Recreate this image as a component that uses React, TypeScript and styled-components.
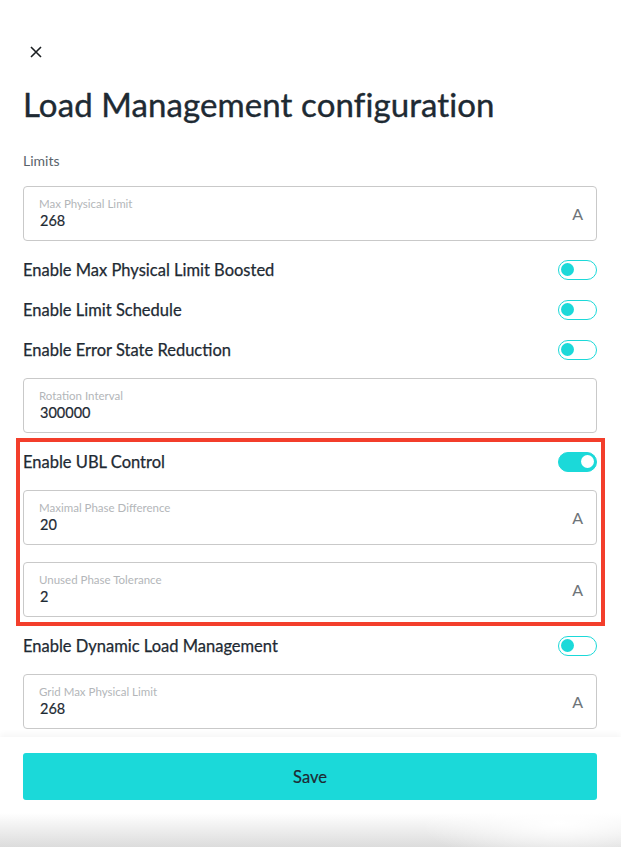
import React from "react";
import styled, { createGlobalStyle, css } from "styled-components";

const Global = createGlobalStyle`
  html, body { margin: 0; padding: 0; background: #ffffff; }
  body { font-family: Lato, "Open Sans", Arial, sans-serif; color: #1e2a33; }
  * { box-sizing: border-box; }
`;

const Page = styled.div`
  width: 621px;
  height: 847px;
  display: flex;
  flex-direction: column;
  overflow: hidden;
  position: relative;
  background: #fff;
  &::after {
    content: "";
    position: absolute;
    left: 0;
    right: 0;
    bottom: 0;
    height: 34px;
    background:
      radial-gradient(ellipse 140px 40px at 560px 10px, rgba(255,255,255,1) 0%, rgba(255,255,255,0) 100%),
      linear-gradient(to bottom, rgba(255,255,255,0) 0%, rgba(218,218,218,0.95) 100%);
    pointer-events: none;
  }
`;

const Scroll = styled.div`
  flex: 1;
  overflow: hidden;
  padding: 0 24px 0 23px;
`;

const CloseButton = styled.button`
  display: block;
  margin: 45px 0 0 6px;
  padding: 0;
  width: 16px;
  height: 16px;
  border: none;
  background: none;
  color: #1b1f22;
  cursor: pointer;
`;

const Title = styled.h1`
  margin: 23px 0 0;
  font-size: 33px;
  font-weight: 400;
  line-height: 40px;
  letter-spacing: 0.1px;
  color: #1e2a33;
  -webkit-text-stroke: 0.4px #1e2a33;
`;

const Section = styled.div`
  margin: 28px 0 16px;
  font-size: 14px;
  line-height: 18px;
  color: #59636b;
`;

const Field = styled.div<{ $mt?: number; $mb?: number }>`
  height: 55px;
  border: 1px solid #c9c9c9;
  border-radius: 4px;
  display: flex;
  align-items: center;
  padding: 0 13px 0 15px;
  margin-top: ${(p) => p.$mt ?? 0}px;
  margin-bottom: ${(p) => p.$mb ?? 0}px;
`;

const FieldBody = styled.div`
  flex: 1;
  display: flex;
  flex-direction: column;
  padding-top: 1px;
`;

const FieldLabel = styled.span`
  font-size: 11.5px;
  line-height: 14px;
  color: #b3b6b9;
`;

const FieldValue = styled.span`
  font-size: 14.5px;
  line-height: 20px;
  margin-left: 1px;
  color: #1e2a33;
  -webkit-text-stroke: 0.2px #1e2a33;
`;

const Unit = styled.span`
  font-size: 16px;
  color: #6e7479;
  margin-bottom: 1px;
`;

const ToggleRow = styled.div`
  height: 40px;
  display: flex;
  align-items: center;
  justify-content: space-between;
`;

const ToggleLabel = styled.span`
  font-size: 16.5px;
  font-weight: 400;
  color: #1e2a33;
  -webkit-text-stroke: 0.25px #1e2a33;
`;

const Switch = styled.span<{ $on?: boolean }>`
  position: relative;
  width: 39px;
  height: 20px;
  border-radius: 10px;
  border: 1.5px solid #1bd9d9;
  background: ${(p) => (p.$on ? "#1bd9d9" : "#fff")};
  &::after {
    content: "";
    position: absolute;
    top: 2px;
    width: 13px;
    height: 13px;
    border-radius: 50%;
    ${(p) =>
      p.$on
        ? css`
            right: 2px;
            background: #fff;
          `
        : css`
            left: 2px;
            background: #1bd9d9;
          `}
  }
`;

const Highlight = styled.div`
  margin: 5px -8px 0 -7px;
  padding: 0 4px 5px 3px;
  border: 4px solid #f33e2b;
`;

const Footer = styled.div`
  flex: none;
  height: 110px;
  padding: 16px 24px 0 23px;
  background: #fff;
  box-shadow: 0 -3px 6px rgba(0, 0, 0, 0.04);
  position: relative;
`;

const SaveButton = styled.button`
  width: 100%;
  height: 47px;
  border: none;
  border-radius: 3px;
  background: #1bd9d9;
  color: #1e2a33;
  font-family: Lato, "Open Sans", Arial, sans-serif;
  font-size: 16.5px;
  font-weight: 400;
  -webkit-text-stroke: 0.2px #1e2a33;
  cursor: pointer;
`;

type FieldProps = { label: string; value: string; unit?: string; mt?: number; mb?: number };

const InputField = ({ label, value, unit, mt, mb }: FieldProps) => (
  <Field $mt={mt} $mb={mb}>
    <FieldBody>
      <FieldLabel>{label}</FieldLabel>
      <FieldValue>{value}</FieldValue>
    </FieldBody>
    {unit && <Unit>{unit}</Unit>}
  </Field>
);

const Toggle = ({ label, on }: { label: string; on?: boolean }) => (
  <ToggleRow>
    <ToggleLabel>{label}</ToggleLabel>
    <Switch $on={on} />
  </ToggleRow>
);

export default function App() {
  return (
    <Page>
      <Global />
      <Scroll>
        <CloseButton aria-label="close">
          <svg width="16" height="16" viewBox="0 0 16 16">
            <path d="M2 2 L12 12 M12 2 L2 12" stroke="currentColor" strokeWidth="1.6" fill="none" />
          </svg>
        </CloseButton>
        <Title>Load Management configuration</Title>
        <Section>Limits</Section>
        <InputField label="Max Physical Limit" value="268" unit="A" mb={9} />
        <Toggle label="Enable Max Physical Limit Boosted" />
        <Toggle label="Enable Limit Schedule" />
        <Toggle label="Enable Error State Reduction" />
        <InputField label="Rotation Interval" value="300000" mt={8} />
        <Highlight>
          <Toggle label="Enable UBL Control" on />
          <InputField label="Maximal Phase Difference" value="20" unit="A" mt={8} />
          <InputField label="Unused Phase Tolerance" value="2" unit="A" mt={17} />
        </Highlight>
        <Toggle label="Enable Dynamic Load Management" />
        <InputField label="Grid Max Physical Limit" value="268" unit="A" mt={8} />
      </Scroll>
      <Footer>
        <SaveButton>Save</SaveButton>
      </Footer>
    </Page>
  );
}
